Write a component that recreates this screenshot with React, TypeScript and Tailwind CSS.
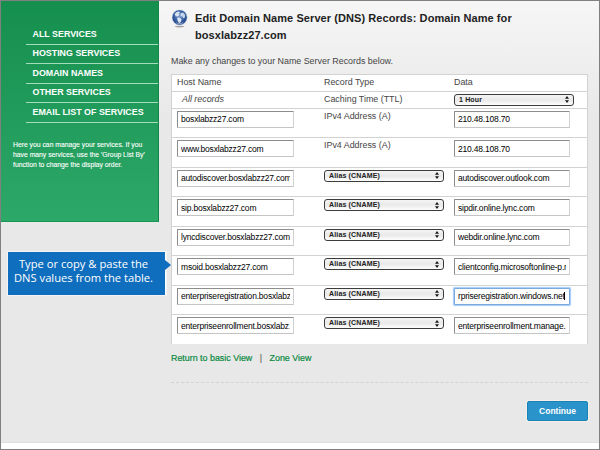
import React from 'react';

const services = ['ALL SERVICES', 'HOSTING SERVICES', 'DOMAIN NAMES', 'OTHER SERVICES', 'EMAIL LIST OF SERVICES'];

type DnsRecord = { host: string; alias: boolean; data: string; focused?: boolean };

const records: DnsRecord[] = [
  { host: 'bosxlabzz27.com', alias: false, data: '210.48.108.70' },
  { host: 'www.bosxlabzz27.com', alias: false, data: '210.48.108.70' },
  { host: 'autodiscover.bosxlabzz27.com', alias: true, data: 'autodiscover.outlook.com' },
  { host: 'sip.bosxlabzz27.com', alias: true, data: 'sipdir.online.lync.com' },
  { host: 'lyncdiscover.bosxlabzz27.com', alias: true, data: 'webdir.online.lync.com' },
  { host: 'msoid.bosxlabzz27.com', alias: true, data: 'clientconfig.microsoftonline-p.n' },
  { host: 'enterpriseregistration.bosxlabz', alias: true, data: 'rpriseregistration.windows.net', focused: true },
  { host: 'enterpriseenrollment.bosxlabz.', alias: true, data: 'enterpriseenrollment.manage.' },
];

function Globe() {
  return (
    <svg className="h-[19px] w-4 shrink-0" viewBox="0 0 16 19">
      <defs>
        <radialGradient id="globe" cx="48%" cy="42%" r="58%">
          <stop offset="0" stopColor="#7d9dcb" />
          <stop offset="0.55" stopColor="#3a64a6" />
          <stop offset="1" stopColor="#1d3c80" />
        </radialGradient>
      </defs>
      <ellipse cx="7.6" cy="17.6" rx="4.8" ry="0.8" fill="#868686" opacity="0.75" />
      <circle cx="7.6" cy="8.4" r="7.5" fill="url(#globe)" stroke="#b7c8df" strokeWidth="0.5" />
      <path d="M2.6 5 4.6 3l2.6-.6.8 1-1.4 1.4 1 1-1.6 1.4-2.2.4z" fill="#e8eff7" opacity="0.9" />
      <path d="M8.4 4.2 11 3.6l2.2 2.2-.4 3-1.6.4-.8-1.6-1.8-.4z" fill="#dde7f3" opacity="0.85" />
      <path d="m5.2 8.6 2.8.2 1.6 1.6-.8 2.6-1.6 1.2-1.6-2.4z" fill="#eef3f9" opacity="0.9" />
      <path d="M3.4 12.6q4 3.8 8.4 0-1 2.6-4.2 2.6t-4.2-2.6z" fill="#cfdced" opacity="0.8" />
    </svg>
  );
}

function Field({ value, width, focused }: { value: string; width: string; focused?: boolean }) {
  const frame = focused
    ? 'border-[#7ba9dc] shadow-[0_0_0_1px_#a8d0fa,0_0_1px_1px_#a8d0fa]'
    : 'border-t-[#8d8d8d] border-l-[#8d8d8d] border-r-[#d0d0d0] border-b-[#c4c4c4]';
  return (
    <div className={`flex h-[17px] items-center rounded-[1px] border bg-white px-[3px] ${width} ${frame}`}>
      <div className="flex w-full items-center overflow-hidden whitespace-nowrap text-[8.5px] leading-[14px] tracking-[-0.19px] text-black">
        <span>{value}</span>
        {focused && <span className="-ml-px h-[8px] w-px shrink-0 bg-black" />}
      </div>
    </div>
  );
}

function Picker({ label }: { label: string }) {
  return (
    <div className="flex h-3 w-[120px] items-center justify-between rounded-[3px] border border-[#3c3c3c] bg-linear-to-b from-[#f4f4f4] via-[#e9e9e9] to-[#fdfdfd] pr-[4px] pl-[4px]">
      <span className="text-[7px] leading-[10px] font-bold tracking-[0.15px] text-[#222]">{label}</span>
      <svg className="h-[7px] w-[4px]" viewBox="0 0 4 7">
        <path d="M2 0 4 2.7H0zM0 4.2h4L2 7z" fill="#151515" />
      </svg>
    </div>
  );
}

const columns = 'grid grid-cols-[147px_130px_1fr] pl-[5px] border-t border-[#d2d2d2]';

export default function App() {
  return (
    <div className="relative h-[450px] w-[600px] overflow-hidden border border-[#808080] bg-white font-['Liberation_Sans',Arial,sans-serif] text-[#444]">
      <div className="flex h-[442px] border-b border-[#dedede] bg-[#e8e8e8] bg-[linear-gradient(to_bottom,#f6f6f6_0,#e8e8e8_120px)]">
        <aside className="h-[221px] w-[158px] shrink-0 border-r border-b border-r-[#0e8747] border-b-[#1c9455] bg-linear-to-b from-[#158f4e] to-[#2ca868] pt-[24px]">
          <nav className="ml-[25px]">
            {services.map((service) => (
              <div
                key={service}
                className="flex h-[19.5px] items-center border-b border-[#a4dcbd] pl-[6.5px] text-[8.9px] font-bold whitespace-nowrap text-white"
              >
                {service}
              </div>
            ))}
          </nav>
          <p className="mt-[17px] ml-3 text-[6.8px] leading-[10.4px] whitespace-nowrap text-white [-webkit-text-stroke:0.1px_white]">
            Here you can manage your services. If you
            <br />
            have many services, use the &apos;Group List By&apos;
            <br />
            function to change the display order.
          </p>
        </aside>

        <main className="flex w-[428px] flex-col pt-2 pl-3">
          <header className="flex h-[43px]">
            <div className="ml-px">
              <Globe />
            </div>
            <h1 className="ml-[7px] pt-px text-[11px] leading-[16.5px] font-bold tracking-[0.07px] whitespace-nowrap text-[#222]">
              Edit Domain Name Server (DNS) Records: Domain Name for
              <br />
              bosxlabzz27.com
            </h1>
          </header>
          <p className="h-[22px] text-[8.9px] leading-[18px] whitespace-nowrap">
            Make any changes to your Name Server Records below.
          </p>

          <section className="h-[270px] w-[417px] shrink-0 border-x border-[#d2d2d2] bg-white text-[8.9px]">
            <div className={`h-[16.5px] items-center ${columns}`}>
              <span>Host Name</span>
              <span>Record Type</span>
              <span>Data</span>
            </div>
            <div className={`h-[17px] items-center ${columns}`}>
              <span className="pl-[5px] italic">All records</span>
              <span>Caching Time (TTL)</span>
              <Picker label="1 Hour" />
            </div>
            {records.map((record) => (
              <div key={record.host} className={`h-[29.55px] items-start pt-[2px] ${columns}`}>
                <Field value={record.host} width="w-[117px]" />
                {record.alias ? <Picker label="Alias (CNAME)" /> : <span className="leading-[10px]">IPv4 Address (A)</span>}
                <Field value={record.data} width="w-[116px]" focused={record.focused} />
              </div>
            ))}
          </section>

          <div className="mt-[8px] flex text-[8.9px] leading-[12px] text-[#0a8a3f] [-webkit-text-stroke:0.2px_#0a8a3f]">
            <span>Return to basic View</span>
            <span className="mx-[7.5px] text-[#444] [-webkit-text-stroke:0]">|</span>
            <span>Zone View</span>
          </div>
          <div className="mt-[18px] w-[417px] border-t border-dashed border-[#d3d3d3]" />
          <button className="mt-[18px] -mr-px flex h-5 w-[61px] shrink-0 items-center justify-center self-end rounded-[2px] border border-[#1683bb] bg-[#2a93ca] text-[8.5px] font-bold text-white shadow-[0_0_0_1px_#f4f0e8]">
            Continue
          </button>
        </main>
      </div>

      {/* Callout that points at the record table */}
      <div className="absolute top-[251px] left-[7px] h-[43px] w-[158px] border-r border-white bg-[#106ebe] pt-[5px] pr-[6px] text-center font-['Open_Sans','Noto_Sans',sans-serif] text-[11.2px] leading-[14px] whitespace-nowrap text-white shadow-[0_0_0_1px_#f4f4f4]">
        Type or copy &amp; paste the
        <br />
        DNS values from the table.
        <svg className="absolute top-[8px] -right-[6px] h-[10px] w-[6px]" viewBox="0 0 6 10">
          <path d="M0 0 6 5 0 10z" fill="#106ebe" />
        </svg>
      </div>
    </div>
  );
}
